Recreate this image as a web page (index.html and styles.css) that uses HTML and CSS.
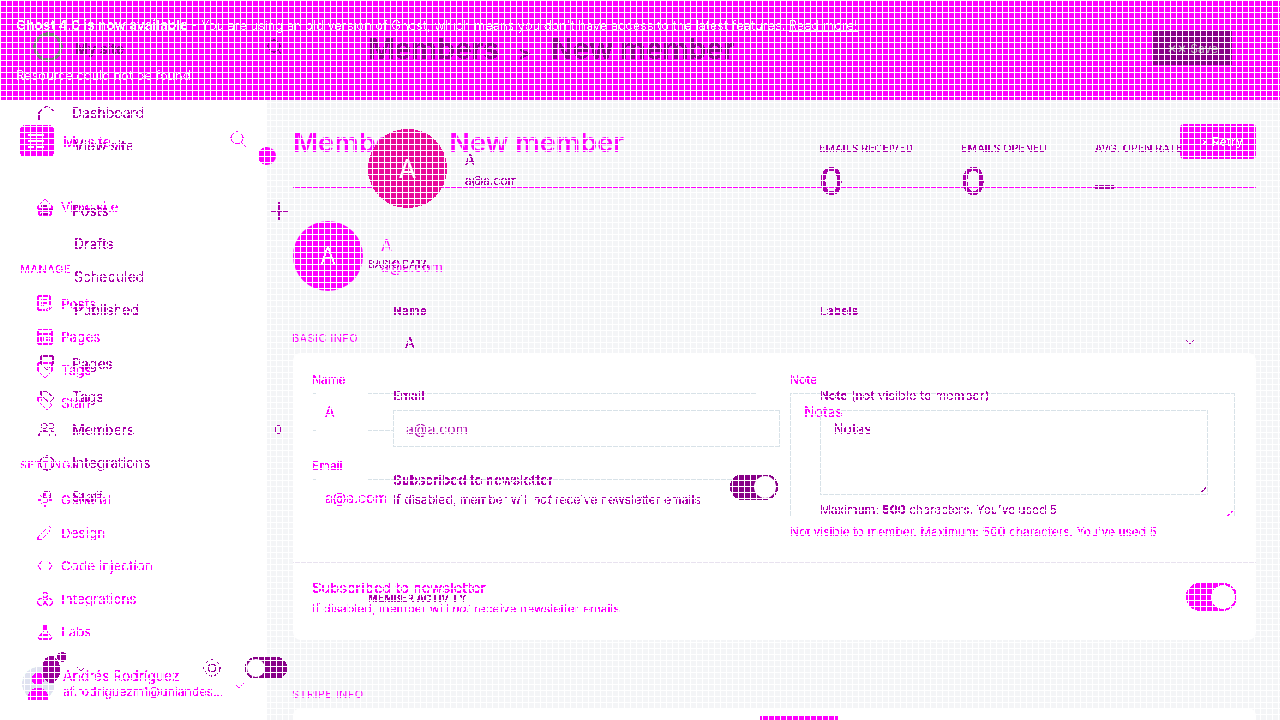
FILE: index.html
```html
<!DOCTYPE html>
<html lang="en">
<head>
    <meta charset="UTF-8">
    <meta name="viewport" content="width=device-width, initial-scale=1.0">
    <title>Members - New member</title>
    <link rel="stylesheet" href="styles.css">
</head>
<body>
    <svg class="defs" width="0" height="0">
        <filter id="hard-front" color-interpolation-filters="sRGB"><feComponentTransfer><feFuncG type="discrete" tableValues="0 0 0 0 0 0 0 0 0 0 1 1 1 .85 .89 1"/></feComponentTransfer></filter>
        <filter id="hard-back" color-interpolation-filters="sRGB"><feComponentTransfer><feFuncA type="discrete" tableValues="0 1 1"/></feComponentTransfer></filter>
    </svg>

    <!-- bright layer, sits under everything -->
    <div class="layer front">
        <div class="alert">
            <p><b>Ghost 4.0 is now available</b> - You are using an old version of Ghost, which means you don't have access to the latest features. <u>Read more!</u></p>
        </div>
        <div class="alert">
            <p>Resource could not be found</p>
        </div>
        <div class="front-row">
            <aside class="front-side">
                <div class="site-row">
                    <span class="site-logo">
                        <svg width="34" height="32" viewBox="0 0 34 32"><path d="M8 10h16M8 16h16M8 22h6M17 22h7"/></svg>
                    </span>
                    <span class="site-name">My site...</span>
                    <svg class="site-search" width="18" height="18" viewBox="0 0 18 18"><circle cx="7" cy="7" r="6"/><path d="M11.5 11.5 17 17"/></svg>
                </div>
                <a class="front-item view-site">
                    <svg width="16" height="18" viewBox="0 0 16 18"><path d="M1 8 8 1l7 7M1 8v3h14V8M2 13h12v4H2z"/></svg>
                    View site
                </a>
                <h6 class="side-head">MANAGE</h6>
                <a class="front-item">
                    <svg width="16" height="18" viewBox="0 0 16 18"><path d="M1 1h12v9M1 1v14h7M4 5h6M4 8h6M4 11h3M9 15l5-4 1 1-5 4z"/></svg>
                    Posts
                </a>
                <a class="front-item">
                    <svg width="16" height="16" viewBox="0 0 16 16"><path d="M1 1h14v14H1zM1 5h14M4 8h2v4H4zM9 8h4M9 11h4"/></svg>
                    Pages
                </a>
                <a class="front-item">
                    <svg width="16" height="18" viewBox="0 0 16 18"><path d="M1 2h14v8l-7 7-7-7zM5 6h1M10 6h1"/></svg>
                    Tags
                </a>
                <a class="front-item">
                    <svg width="16" height="16" viewBox="0 0 16 16"><path d="M1 2h5l9 8-5 5-9-9zM4 5h1"/></svg>
                    Staff
                </a>
                <h6 class="side-head settings-head">SETTINGS</h6>
                <a class="front-item">
                    <svg width="16" height="16" viewBox="0 0 16 16"><circle cx="8" cy="8" r="3"/><path d="M8 1v3M8 12v3M1 8h3M12 8h3M3 3l2 2M11 11l2 2M13 3l-2 2M5 11l-2 2"/></svg>
                    General
                </a>
                <a class="front-item">
                    <svg width="16" height="16" viewBox="0 0 16 16"><path d="M1 15v-3l9-9 3 3-9 9zM12 1l3 3"/></svg>
                    Design
                </a>
                <a class="front-item">
                    <svg width="16" height="12" viewBox="0 0 16 12"><path d="M5 1 1 6l4 5M11 1l4 5-4 5"/></svg>
                    Code injection
                </a>
                <a class="front-item">
                    <svg width="16" height="16" viewBox="0 0 16 16"><circle cx="8" cy="4" r="2.5"/><circle cx="4" cy="11" r="3.5"/><circle cx="12" cy="11" r="3.5"/></svg>
                    Integrations
                </a>
                <a class="front-item">
                    <svg width="16" height="16" viewBox="0 0 16 16"><path d="M6 1h4M7 1v5L1 14l1 1h12l1-1-6-8V1M4 11h8"/></svg>
                    Labs
                </a>
                <div class="user-row">
                    <svg class="user-pic" width="33" height="33" viewBox="0 0 33 33"><circle class="pic-bg" cx="16.5" cy="16.5" r="16.5"/><circle class="pic-fg" cx="16" cy="12" r="6"/><path class="pic-fg" d="M6 33c0-9 4-12 10-12s10 3 10 12z"/></svg>
                    <div class="user-text">
                        <strong>Andrés Rodríguez</strong>
                        <span>af.rodriguezm1@uniandes...</span>
                    </div>
                    <svg class="user-caret" width="12" height="7" viewBox="0 0 12 7"><path d="m1 1 5 5 5-5"/></svg>
                </div>
            </aside>
            <main class="front-main">
                <header class="front-head">
                    <h1>Members <i>&gt;</i> New member</h1>
                    <button class="retry"><span>×</span> Retry</button>
                </header>
                <div class="front-profile">
                    <span class="big-pic">A</span>
                    <div class="front-who">
                        <b>A</b>
                        <span>a@a.com</span>
                    </div>
                </div>
                <h6 class="block-head">BASIC INFO</h6>
                <section class="card">
                    <div class="card-top">
                        <div>
                            <label>Name</label>
                            <div class="field">A</div>
                            <label>Email</label>
                            <div class="field field-open">a@a.com</div>
                        </div>
                        <div>
                            <label>Note</label>
                            <div class="note-field">Notas<em></em></div>
                            <p class="help">Not visible to member. Maximum: <b>500</b> characters. You've used 5</p>
                        </div>
                    </div>
                    <div class="card-bottom">
                        <div>
                            <strong>Subscribed to newsletter</strong>
                            <p>If disabled, member will <i>not</i> receive newsletter emails</p>
                        </div>
                        <span class="switch"></span>
                    </div>
                </section>
                <h6 class="block-head stripe-head">STRIPE INFO</h6>
                <section class="card stripe-card"><span class="stripe-btn"></span></section>
            </main>
        </div>
        <span class="side-dot"></span>
    </div>

    <!-- dark layer, no backgrounds, drawn over the bright one -->
    <div class="layer back">
        <div class="back-top">
            <svg class="back-logo" width="30" height="30" viewBox="0 0 30 30"><circle cx="15" cy="15" r="13"/></svg>
            <span class="back-site">My site</span>
            <svg class="back-search" width="16" height="18" viewBox="0 0 16 18"><circle cx="7" cy="7" r="6"/><path d="m11 11 4 5"/></svg>
            <h1>Members <i>&gt;</i> New member</h1>
            <button class="save"><span>✕✕</span> Save</button>
        </div>
        <div class="back-row">
            <nav class="back-side">
                <a class="back-item">
                    <svg width="18" height="18" viewBox="0 0 18 18"><path d="M1 17V8l8-6 7 5"/></svg>
                    <span>Dashboard</span>
                </a>
                <a class="back-item"><svg width="18" height="18" viewBox="0 0 18 18"></svg><span class="sub-link">View site</span></a>
                <a class="back-item blank"></a>
                <a class="back-item">
                    <svg width="18" height="18" viewBox="0 0 18 18"><path d="M3 4h6M3 8h12M3 12h8"/></svg>
                    <span>Posts</span>
                    <svg class="plus" width="18" height="18" viewBox="0 0 18 18"><path d="M0 9h18M9 0v18"/></svg>
                </a>
                <a class="back-item"><svg width="18" height="18" viewBox="0 0 18 18"></svg><span class="sub-link">Drafts</span></a>
                <a class="back-item"><svg width="18" height="18" viewBox="0 0 18 18"></svg><span class="sub-link">Scheduled</span></a>
                <a class="back-item"><svg width="18" height="18" viewBox="0 0 18 18"></svg><span class="sub-link">Published</span></a>
                <a class="back-item group-start">
                    <svg width="18" height="18" viewBox="0 0 18 18"><path d="M3 1h12v8l-6 6-6-6z"/></svg>
                    <span>Pages</span>
                </a>
                <a class="back-item">
                    <svg width="18" height="18" viewBox="0 0 18 18"><path d="M3 3h5l8 7-5 5-8-8z"/></svg>
                    <span>Tags</span>
                </a>
                <a class="back-item">
                    <svg width="18" height="18" viewBox="0 0 18 18"><circle cx="6" cy="5" r="3"/><circle cx="13" cy="5" r="3"/><path d="M1 15c0-4 2-5 5-5s5 1 5 5M13 10c2 0 4 1 4 5"/></svg>
                    <span>Members</span><b class="count">0</b>
                </a>
                <a class="back-item">
                    <svg width="18" height="18" viewBox="0 0 18 18"><circle cx="9" cy="9" r="7"/><path d="M7 3h4M7 15h4"/></svg>
                    <span>Integrations</span>
                </a>
                <a class="back-item staff-item">
                    <svg width="18" height="18" viewBox="0 0 18 18"><circle cx="9" cy="7" r="4"/></svg>
                    <span>Staff</span>
                </a>
                <svg class="back-caret" width="12" height="7" viewBox="0 0 12 7"><path d="m1 1 5 5 5-5"/></svg>
                <div class="back-foot">
                    <span class="foot-blob"></span>
                    <span class="foot-dot"></span>
                    <svg class="foot-gear" width="20" height="20" viewBox="0 0 20 20"><circle cx="10" cy="10" r="4"/><circle cx="10" cy="10" r="8" stroke-dasharray="4 2"/></svg>
                    <span class="foot-switch"></span>
                </div>
            </nav>
            <main class="back-main">
                <div class="back-profile">
                    <span class="pink-pic">A</span>
                    <div class="back-who">
                        <b>A</b>
                        <span>a@a.com</span>
                    </div>
                    <div class="stats">
                        <div class="stat">EMAILS RECEIVED<strong>0</strong></div>
                        <div class="stat">EMAILS OPENED<strong>0</strong></div>
                        <div class="stat">AVG. OPEN RATE<strong>–</strong></div>
                    </div>
                </div>
                <h6 class="back-head">BASIC DATA</h6>
                <div class="back-form">
                    <div class="back-col">
                        <label>Name</label>
                        <div class="back-field">A</div>
                        <label>Email</label>
                        <div class="back-field boxed email-box">a@a.com</div>
                        <div class="back-sub">
                            <div>
                                <label class="sub-label">Subscribed to newsletter</label>
                                <p>If disabled, member will <i>not</i> receive newsletter emails</p>
                            </div>
                            <span class="back-switch"></span>
                        </div>
                    </div>
                    <div class="back-col">
                        <label>Labels</label>
                        <div class="back-field">
                            <svg class="field-caret" width="10" height="6" viewBox="0 0 10 6"><path d="m1 1 4 4 4-4"/></svg>
                        </div>
                        <label>Note <span class="label-light">(not visible to member)</span></label>
                        <div class="back-field boxed note-box">Notas<em></em></div>
                        <p class="back-help">Maximum: <b>500</b> characters. You've used 5</p>
                    </div>
                </div>
                <h6 class="back-head activity">MEMBER ACTIVITY</h6>
            </main>
        </div>
    </div>

    <div class="grid-lines"></div>
</body>
</html>
```

FILE: styles.css
```css
* {
    box-sizing: border-box;
}

body {
    margin: 0;
    width: 1280px;
    height: 720px;
    overflow: hidden;
    position: relative;
    font-family: Inter, "Noto Sans", sans-serif;
    background-color: #f4f5f7;
}

h1, h6, p, label {
    margin: 0;
    font-weight: normal;
}

svg {
    fill: none;
    stroke: currentColor;
    stroke-width: 1;
    flex-shrink: 0;
}

button {
    border: 0;
    font-family: inherit;
    padding: 0;
}

.defs {
    position: absolute;
}

.layer {
    position: absolute;
    top: 0;
    left: 0;
    width: 1280px;
    height: 720px;
    overflow: hidden;
}

.grid-lines {
    position: absolute;
    top: 0;
    left: 0;
    width: 1280px;
    height: 720px;
    pointer-events: none;
    background-image:
        linear-gradient(to right, #fff 1px, transparent 1px),
        linear-gradient(to bottom, #fff 1px, transparent 1px);
    background-size: 6px 6px;
}

/* bright layer */
.front {
    color: #f0f;
    filter: url(#hard-front);
}

.alert {
    height: 50px;
    padding-left: 16px;
    display: flex;
    align-items: center;
    background-color: #f0f;
    color: #fff;
    font-size: 12.8px;
}

.alert b {
    font-size: 13.5px;
}

.front-row {
    display: flex;
    height: 620px;
}

.front-side {
    width: 267px;
    background-color: #fff;
    padding: 25px 0 0 20px;
    flex-shrink: 0;
}

.site-row {
    display: flex;
    align-items: center;
    height: 32px;
}

.site-logo {
    width: 34px;
    height: 32px;
    border-radius: 5px;
    background-color: #f0f;
    color: #fff;
}

.site-logo svg {
    display: block;
    stroke-width: 2;
}

.site-name {
    margin-left: 9px;
    font-size: 14px;
}

.site-search {
    margin-left: 107px;
    margin-top: -2px;
}

.front-item {
    display: flex;
    align-items: center;
    gap: 8px;
    height: 33px;
    padding-left: 17px;
    font-size: 13.5px;
}

.view-site {
    margin-top: 33px;
}

.side-head {
    margin-top: 38px;
    margin-bottom: 10px;
    font-size: 11px;
    line-height: 16px;
    letter-spacing: .5px;
}

.settings-head {
    margin-top: 38px;
    margin-bottom: 10px;
}

.user-row {
    display: flex;
    align-items: center;
    margin-top: 19px;
    margin-left: 2px;
    height: 33px;
}

.user-pic .pic-bg {
    fill: #dfe8f0;
    stroke: none;
}

.user-pic .pic-fg {
    fill: #f0f;
    stroke: none;
}

.user-text {
    display: flex;
    flex-direction: column;
    margin-left: 8px;
    width: 170px;
    font-size: 12.3px;
    line-height: 16px;
}

.user-text strong {
    font-size: 13.8px;
    font-weight: 400;
}

.user-caret {
    margin-top: 4px;
}

.side-dot {
    position: absolute;
    left: 258px;
    top: 147px;
    width: 18px;
    height: 18px;
    border-radius: 50%;
    background-color: #f0f;
}

.front-main {
    flex: 1;
    padding: 24px 24px 0 26px;
}

.front-head {
    display: flex;
    justify-content: space-between;
    height: 64px;
    border-bottom: 1px solid #f0f;
}

.front-head h1 {
    font-size: 27.2px;
    font-weight: 600;
    line-height: 38px;
}

.front-head i {
    font-style: normal;
    font-size: 18px;
    margin: 0 3px;
}

.retry {
    width: 76px;
    height: 35px;
    border-radius: 4px;
    background-color: #f0f;
    color: #fff;
    font-size: 12px;
    font-weight: 600;
    padding-left: 8px;
}

.front-profile {
    display: flex;
    align-items: center;
    gap: 18px;
    margin-top: 33px;
}

.big-pic {
    width: 70px;
    height: 70px;
    border-radius: 50%;
    background-color: #f0f;
    color: #fff;
    font-size: 23px;
    display: flex;
    align-items: center;
    justify-content: center;
}

.front-who {
    display: flex;
    flex-direction: column;
    font-size: 14px;
    line-height: 22px;
}

.front-who b {
    font-weight: 400;
    font-size: 16px;
}

.block-head {
    margin-top: 40px;
    margin-left: -1px;
    font-size: 11px;
    line-height: 14px;
    letter-spacing: .4px;
}

.card {
    margin-top: 8px;
    height: 287px;
    background-color: #fff;
    border-radius: 8px;
}

.card-top {
    display: grid;
    grid-template-columns: 445px 445px;
    gap: 33px;
    padding: 20px 19px 0;
    height: 210px;
    border-bottom: 1px solid #e8ecef;
}

.card-top label {
    display: block;
    font-size: 12px;
    line-height: 14px;
    font-weight: 500;
    margin-bottom: 6px;
}

/* the field borders only show at the ends, the left run is broken in the shot */
.field {
    height: 38px;
    padding: 0 13px;
    line-height: 38px;
    font-size: 14px;
    margin-bottom: 28px;
    border-right: 1px solid #d8e2e8;
    background-image:
        linear-gradient(to right, #d8e2e8 4px, transparent 4px, transparent 56px, #d8e2e8 56px),
        linear-gradient(to right, #d8e2e8 4px, transparent 4px, transparent 56px, #d8e2e8 56px);
    background-size: 100% 1px;
    background-position: top, bottom;
    background-repeat: no-repeat;
}

.field-open {
    background-position: top, top;
}

.note-field {
    height: 124px;
    padding: 0 13px;
    font-size: 14px;
    line-height: 36px;
    margin-bottom: 8px;
    position: relative;
    border: 1px solid #d8e2e8;
    border-bottom: 0;
}

.note-field em {
    position: absolute;
    right: 1px;
    bottom: 1px;
    width: 6px;
    height: 6px;
    background: linear-gradient(135deg, transparent 50%, #f0f 50%, #f0f 60%, transparent 60%);
}

.help {
    font-size: 12px;
    line-height: 14px;
}

.help b {
    font-weight: 600;
}

.card-bottom {
    display: flex;
    justify-content: space-between;
    align-items: center;
    padding: 0 19px;
    height: 76px;
    padding-bottom: 6px;
}

.card-bottom strong {
    font-size: 14.6px;
    font-weight: 500;
    line-height: 22px;
    display: block;
}

.card-bottom p {
    font-size: 12.2px;
    line-height: 20px;
}

.switch {
    width: 51px;
    height: 28px;
    border-radius: 14px;
    background-color: #f0f;
    position: relative;
    margin-top: -2px;
}

.switch::after {
    content: "";
    position: absolute;
    right: 2px;
    top: 2px;
    width: 24px;
    height: 24px;
    border-radius: 50%;
    background-color: #fff;
}

.stripe-head {
    margin-top: 47px;
}

.stripe-card {
    margin-top: 7px;
    padding-top: 8px;
}

.stripe-btn {
    display: block;
    width: 78px;
    height: 30px;
    margin-left: 467px;
    background-color: #f0f;
}

/* dark layer */
.back {
    color: #a0a;
    filter: url(#hard-back);
}

.back-top {
    display: flex;
    align-items: center;
    height: 96px;
    position: relative;
    padding-bottom: 0;
}

.back-logo {
    margin-left: 33px;
    margin-top: -2px;
    color: #777;
    stroke-width: 3;
}

.back-site {
    margin-left: 12px;
    color: #808;
    font-size: 14px;
    font-weight: 600;
}

.back-search {
    margin-left: 143px;
    color: #808;
}

.back-top h1 {
    margin-left: 85px;
    color: #808;
    font-size: 28.5px;
    font-weight: 600;
}

.back-top h1 i {
    font-style: normal;
    font-size: 18px;
    margin: 0 13px;
}

.save {
    margin-left: auto;
    margin-right: 48px;
    width: 79px;
    height: 34px;
    background-color: #808;
    color: #bbb;
    font-size: 12px;
}

.back-row {
    display: flex;
}

.back-side {
    width: 368px;
    padding-left: 38px;
    flex-shrink: 0;
    position: relative;
    height: 624px;
}

.back-item {
    display: flex;
    align-items: center;
    gap: 16px;
    width: 250px;
    height: 33px;
    font-size: 14px;
}

.back-item.blank {
    height: 32px;
}

.sub-link {
    margin-left: 2px;
}

.group-start {
    margin-top: 21px;
}

.staff-item {
    margin-top: 1px;
}

.plus {
    margin-left: auto;
}

.count {
    margin-left: auto;
    font-weight: 400;
    font-size: 12px;
    padding-right: 6px;
}

.back-caret {
    position: absolute;
    left: 75px;
    top: 569px;
}

.back-foot {
    position: absolute;
    left: 42px;
    top: 560px;
    width: 246px;
    height: 30px;
    display: flex;
    align-items: flex-start;
    color: #909;
}

.foot-blob {
    width: 18px;
    height: 27px;
    border-radius: 50%;
    background-color: #909;
}

.foot-dot {
    width: 10px;
    height: 10px;
    margin-left: -3px;
    margin-top: -4px;
    border-radius: 50%;
    background-color: #909;
}

.foot-gear {
    margin-left: 135px;
    margin-top: 2px;
}

.foot-switch {
    margin-left: 23px;
    width: 42px;
    height: 22px;
    border-radius: 11px;
    background-color: #808;
    position: relative;
    margin-top: 1px;
}

.foot-switch::after {
    content: "";
    position: absolute;
    left: 2px;
    top: 2px;
    width: 18px;
    height: 18px;
    border-radius: 50%;
    background-color: #fff;
}

.back-main {
    flex: 1;
    padding-right: 25px;
}

.back-profile {
    display: flex;
    padding-top: 33px;
}

.pink-pic {
    width: 79px;
    height: 79px;
    border-radius: 50%;
    background-color: #e8099a;
    color: #fff;
    font-size: 26px;
    display: flex;
    align-items: center;
    justify-content: center;
}

.back-who {
    display: flex;
    flex-direction: column;
    margin-left: 18px;
    padding-top: 21px;
    font-size: 12px;
    line-height: 20px;
}

.back-who b {
    font-size: 14px;
    font-weight: 500;
    margin-bottom: 1px;
}

.stats {
    display: flex;
    margin-left: 301px;
    padding-top: 13px;
}

.stat {
    font-size: 10.7px;
    line-height: 14px;
    width: 142px;
}

.stat + .stat {
    width: 134px;
}

.stat strong {
    display: block;
    font-size: 38px;
    line-height: 44px;
    font-weight: 500;
    margin-top: 3px;
}

.stat:last-child strong {
    margin-top: 7px;
}

.back-head {
    font-size: 10.5px;
    line-height: 12px;
    margin-top: 51px;
}

.back-form {
    display: grid;
    grid-template-columns: 387px 388px;
    gap: 40px;
    margin-left: 25px;
    margin-top: 33px;
}

.back-col label {
    display: block;
    font-size: 12px;
    line-height: 14px;
    font-weight: 600;
}

.label-light {
    font-size: 12.7px;
    font-weight: 400;
}

.back-col .sub-label {
    font-size: 13.3px;
}

.back-field {
    height: 36px;
    margin-top: 7px;
    margin-bottom: 28px;
    padding: 0 12px;
    line-height: 36px;
    font-size: 14px;
    border-bottom: 1px solid #d8e2e8;
    position: relative;
}

.boxed {
    border: 1px solid #d8e2e8;
    height: 37px;
}

.email-box {
    background-color: #fff;
}

.note-box {
    height: 85px;
    margin-bottom: 8px;
}

.note-box em {
    position: absolute;
    right: 1px;
    bottom: 1px;
    width: 6px;
    height: 6px;
    background: linear-gradient(135deg, transparent 50%, #909 50%, #909 60%, transparent 60%);
}

.field-caret {
    position: absolute;
    right: 13px;
    top: 14px;
}

.back-help {
    font-size: 12px;
    line-height: 14px;
}

.back-help b {
    font-weight: 700;
}

.back-sub {
    display: flex;
    justify-content: space-between;
    margin-top: -2px;
}

.back-sub p {
    font-size: 12.2px;
    line-height: 18px;
    margin-top: 4px;
}

.back-switch {
    width: 48px;
    height: 26px;
    border-radius: 13px;
    background-color: #808;
    position: relative;
    margin-top: 1px;
    margin-right: 2px;
}

.back-switch::after {
    content: "";
    position: absolute;
    right: 2px;
    top: 2px;
    width: 22px;
    height: 22px;
    border-radius: 50%;
    background-color: #fff;
}

.activity {
    margin-top: 76px;
    font-weight: 600;
}
```
